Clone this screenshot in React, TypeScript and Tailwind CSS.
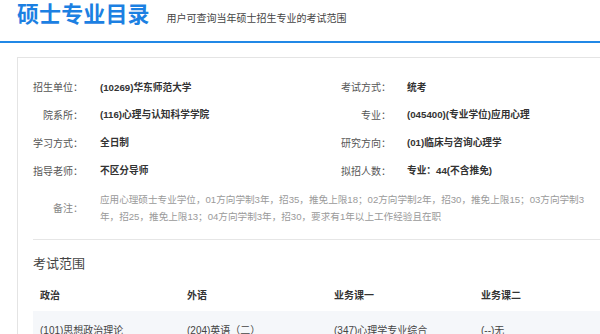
const font = { fontFamily: '"Liberation Sans", "Noto Sans CJK SC", sans-serif' };

const rows = [
  ["招生单位：", "(10269)华东师范大学", "考试方式：", "统考"],
  ["院系所：", "(116)心理与认知科学学院", "专业：", "(045400)(专业学位)应用心理"],
  ["学习方式：", "全日制", "研究方向：", "(01)临床与咨询心理学"],
  ["指导老师：", "不区分导师", "拟招人数：", "专业：44(不含推免)"],
];

const subjects = [
  ["政治", "(101)思想政治理论"],
  ["外语", "(204)英语（二）"],
  ["业务课一", "(347)心理学专业综合"],
  ["业务课二", "(--)无"],
];

const App = () => {
  return (
    <main
      className="w-[600px] h-[334px] overflow-hidden bg-white text-[#333]"
      style={font}
    >
      {/* header */}
      <header className="h-[43px] px-[17px] pt-[1px] flex items-baseline gap-[17px] border-b-2 border-[#2188e6]">
        <h1 className="text-[22px] leading-[28px] font-bold text-[#1c80e2] tracking-[0.1px]">
          硕士专业目录
        </h1>
        <p className="text-[10px] text-[#444]">用户可查询当年硕士招生专业的考试范围</p>
      </header>

      <section className="mt-[14px] ml-[17px] w-[640px] border-l border-t border-[#e4e4e4] pl-[15px] pt-[16px]">
        {rows.map((r) => (
          <div key={r[0]} className="h-[27.8px] flex items-center text-[9.7px]">
            <div className="w-[308px] flex items-center">
              <span className="w-[50px] text-right text-[#555] text-[10px]">{r[0]}</span>
              <span className="ml-[17px] font-bold text-[#333]">{r[1]}</span>
            </div>
            <div className="flex items-center">
              <span className="w-[50px] text-right text-[#555] text-[10px]">{r[2]}</span>
              <span className="ml-[16px] font-bold text-[#333]">{r[3]}</span>
            </div>
          </div>
        ))}

        <div className="mt-[6px] flex items-center">
          <span className="w-[50px] text-right text-[#888] text-[10px]">备注：</span>
          <p className="ml-[17px] leading-[17px] text-[9.6px] text-[#9a9a9a] whitespace-nowrap">
            应用心理硕士专业学位，01方向学制3年，招35，推免上限18；02方向学制2年，招30，推免上限15；03方向学制3
            <br />
            年，招25，推免上限13；04方向学制3年，招30，要求有1年以上工作经验且在职
          </p>
        </div>

        <div className="mt-[14px] border-t border-[#e6e6e6] pt-[15px]">
          <h2 className="text-[13px] leading-[18px] text-[#444]">考试范围</h2>
          <table className="mt-[7px] text-[10px] text-left border-collapse">
            <thead>
              <tr className="h-[31px]">
                {subjects.map((s) => (
                  <th key={s[0]} className="w-[147px] px-[7px] font-bold text-[#333]">
                    {s[0]}
                  </th>
                ))}
              </tr>
            </thead>
            <tbody>
              <tr className="h-[38px] bg-[#f5f7fa]">
                {subjects.map((s) => (
                  <td key={s[0]} className="px-[7px] text-[#444]">
                    {s[1]}
                  </td>
                ))}
              </tr>
            </tbody>
          </table>
        </div>
      </section>
    </main>
  );
};

export default App;
